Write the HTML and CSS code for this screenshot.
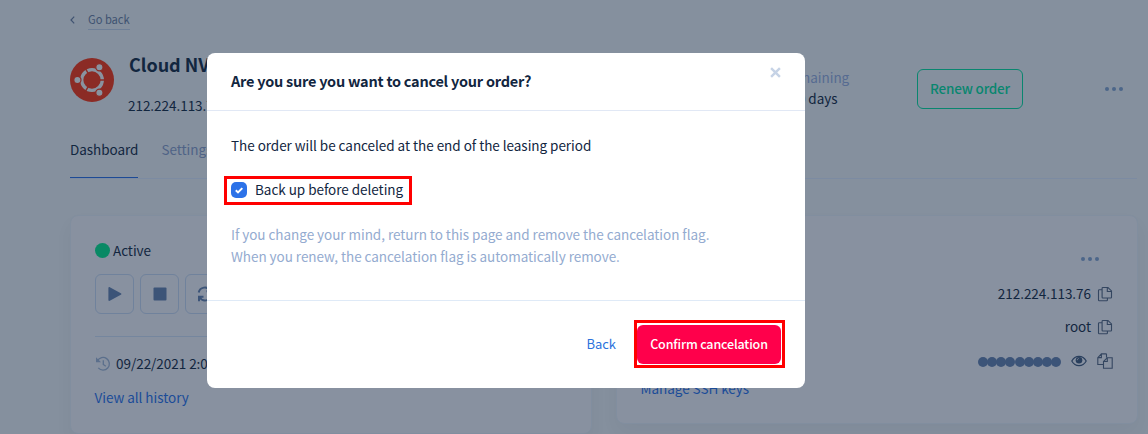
FILE: index.html
```html
<!DOCTYPE html>
<html lang="en">
<head>
<meta charset="utf-8">
<title>Cancel order</title>
<link rel="stylesheet" href="styles.css">
</head>
<body>
<svg class="defs" width="0" height="0">
  <symbol id="copy" viewBox="0 0 16 16"><path d="M5.800 1.500h5.200l3.500 3.400v6.400a.7.7 0 0 1-.7.7H5.800a.7.7 0 0 1-.7-.7V2.200c0-.4.3-.7.7-.7zM10.300 1.500v4h4.200M5.100 3.700H2.200a.7.7 0 0 0-.7.7v9.700c0 .4.3.7.7.7h7.500c.4 0 .7-.3.7-.7V12"/></symbol>
</svg>
<div class="page">
  <nav class="crumb">
    <svg class="chevron" viewBox="0 0 5 8"><path d="M4.2.7 1 4l3.2 3.3"/></svg>
    <a class="goback">Go back</a>
  </nav>
  <header class="head">
    <svg class="logo" viewBox="0 0 44 44">
      <circle cx="22" cy="22" r="22" fill="#8b2b25"/>
      <circle cx="22" cy="22" r="10.3" fill="none" stroke="#8993a0" stroke-width="3.300"/>
      <path d="M29 22h7M18.5 15.9 15 9.9M18.5 28.1 15 34.1" stroke="#8b2b25" stroke-width="1.4"/>
      <g fill="#8993a0" stroke="#8b2b25" stroke-width="1.2">
        <circle cx="7.4" cy="22" r="3.600"/><circle cx="29.4" cy="9.2" r="3.600"/><circle cx="29.4" cy="34.8" r="3.600"/>
      </g>
    </svg>
    <div class="ident"><h1>Cloud NVMe</h1><p>212.224.113.76</p></div>
    <div class="remain"><p class="muted">Remaining</p><p class="days">300 days</p></div>
    <button class="renew">Renew order</button>
    <span class="dots"><i></i><i></i><i></i></span>
  </header>
  <nav class="tabs"><a class="tab on">Dashboard</a><a class="tab">Settings</a></nav>
  <main class="cards">
    <section class="card server">
      <p class="status"><i class="led"></i><span>Active</span></p>
      <div class="controls">
        <span class="ctl"><svg viewBox="0 0 16 16"><path d="M1.4 2v12c0 .8.7 1.2 1.4.8l11-6c.8-.4.8-1.2 0-1.6l-11-6C2.100.8 1.400 1.200 1.400 2z"/></svg></span>
        <span class="ctl"><svg viewBox="0 0 16 16"><rect x="1.500" y="1.500" width="13" height="13" rx="1"/></svg></span>
        <span class="ctl"><svg class="sync" viewBox="0 0 16 16"><path d="M1.700 6.500a6.300 6.300 0 0 1 11.500-2M14.300 9.500a6.300 6.300 0 0 1-11.500 2M14 .8v4.500H9.500M2 15.200v-4.500h4.500"/></svg></span>
      </div>
      <p class="history"><svg viewBox="0 0 16 16"><path d="M2.500 4.800a6.300 6.300 0 1 1 .8 7.100M8.300 4.200v4.300l2.500 1.700"/><path d="M1 1.200v5h5z" class="tip"/></svg><span>09/22/2021 2:05 PM</span></p>
      <a class="link">View all history</a>
    </section>
    <section class="card access">
      <span class="dots"><i></i><i></i><i></i></span>
      <p class="row"><span>212.224.113.76</span><svg class="ico"><use href="#copy"/></svg></p>
      <p class="row"><span>root</span><svg class="ico"><use href="#copy"/></svg></p>
      <p class="row last"><span class="secret"><i></i><i></i><i></i><i></i><i></i><i></i><i></i><i></i><i></i></span>
        <svg class="eye" viewBox="0 0 16 12"><path d="M.8 6C2.500 2.900 5 1.300 8 1.300S13.500 2.900 15.200 6C13.500 9.100 11 10.700 8 10.700S2.500 9.100.8 6z"/><circle cx="8" cy="5.300" r="3.300"/><path class="glint" d="M6.300 5.200c0-.9.600-1.600 1.500-1.700"/></svg>
        <svg class="ico" viewBox="0 0 16 16"><path d="M6.300 11.500H.8V4.600L4.400.9h4.500c.4 0 .6.300.6.600v3M4.400.9v3.700H.8M10.300 4.700h4.900v10.500H6.500V8.500zM10.300 4.700v3.800H6.500"/></svg></p>
      <a class="link">Manage SSH keys</a>
    </section>
  </main>
</div>
<div class="modal">
  <div class="modal-head"><h2>Are you sure you want to cancel your order?</h2>
    <svg class="close" viewBox="0 0 10 10"><path d="M1 1l8 8M9 1 1 9"/></svg></div>
  <div class="modal-body">
    <p class="lead">The order will be canceled at the end of the leasing period</p>
    <label class="backup"><span class="check"><svg viewBox="0 0 16 16"><path d="M4.800 8.300l2.200 2.100 4.300-4.300"/></svg></span><span class="label">Back up before deleting</span></label>
    <p class="hint">If you change your mind, return to this page and remove the cancelation flag.<br>When you renew, the cancelation flag is automatically remove.</p>
  </div>
  <div class="modal-foot"><a class="back">Back</a><span class="mark"><button class="confirm">Confirm cancelation</button></span></div>
</div>
</body>
</html>
```
FILE: styles.css
```css
* { box-sizing: border-box; margin: 0; padding: 0; }
body { width: 1148px; height: 434px; overflow: hidden; position: relative; background: #85909e; color: #12263f;
  font: 13.500px/20px "Noto Sans CJK SC", "Noto Sans", sans-serif; letter-spacing: -.035px; white-space: nowrap; }
button { font: inherit; letter-spacing: inherit; background: none; border: 0; }
i { display: block; }
svg { display: block; flex: none; fill: none; }
.defs { position: absolute; }
.page { height: 434px; overflow: hidden; padding: 11px 10px 0 70px; }
.crumb { display: flex; height: 19px; align-items: flex-start; font-size: 11.200px; line-height: 16px; color: #405371; }
.chevron { width: 5px; height: 8px; margin: 5px 13px 0 0; stroke: #405371; stroke-width: 1.200; }
.goback { height: 19px; border-bottom: 1px solid #6e7f97; }
.head { display: flex; height: 98px; padding-top: 22px; }
.logo { width: 44px; height: 44px; margin-top: 6px; }
.ident { margin-left: 15px; width: 653px; }
h1 { font-size: 18px; line-height: 26px; font-weight: 700; margin-top: -1px; }
.ident p { margin: 18px 0 0 -1px; }
.remain { width: 135px; padding-top: 15px; line-height: 21px; }
.muted { color: #566b91; }
.days { margin-left: 1px; }
.renew { width: 106px; height: 40px; margin-top: 17px; padding-bottom: 2px; border: 1px solid #09866f; border-radius: 6px; color: #09866f; font-weight: 500; font-size: 13.500px; letter-spacing: -.2px; }
.dots { display: flex; gap: 3px; }
.dots i { width: 4px; height: 4px; border-radius: 50%; background: #4c6689; }
.head .dots { margin: 35px 0 0 82px; }
.tabs { display: flex; height: 51px; gap: 24px; border-bottom: 1px solid #7c8ba2; margin-right: 1px; }
.tab { height: 50px; padding-top: 11px; margin-left: -1px; color: #4f6386; }
.on { margin-left: 0; color: #12263f; border-bottom: 1px solid #1d4a95; }
.cards { display: flex; gap: 24px; margin-top: 36px; align-items: flex-start; }
.card { width: 522px; border: 1px solid #818e9f; border-radius: 8px; background: #8891a0; box-shadow: 0 9px 18px rgba(18,38,63,.04); }
.server { height: 219px; padding: 24px 24px; }
.status { display: flex; align-items: center; gap: 3px; height: 21px; }
.status span, .history span, .label { padding-bottom: 1px; }
.led { width: 15px; height: 15px; border-radius: 50%; background: #098965; }
.controls { display: flex; gap: 6px; margin-top: 13px; padding-bottom: 22px; border-bottom: 1px solid #75869e; }
.ctl { display: grid; place-items: center; width: 39px; height: 40px; border: 1px solid #70829c; border-radius: 6px; }
.ctl svg { width: 16px; height: 16px; fill: #3c5478; }
.ctl .sync { fill: none; stroke: #3c5478; stroke-width: 2; }
.history { display: flex; align-items: center; margin-top: 16px; gap: 5px; }
.history svg { width: 16px; height: 16px; stroke: #5b6f8c; stroke-width: 1.300; }
.history .tip { fill: #5b6f8c; stroke: none; }
.link { display: block; margin: 13px 0 0 -.5px; color: #1b4c98; }
.access { height: 209px; padding: 41px 24px 0; }
.access .dots { justify-content: flex-end; margin-right: 14px; }
.row { display: flex; justify-content: flex-end; align-items: center; height: 20px; margin-top: 13px; }
.row span { padding-bottom: 2px; }
.access .dots + .row { margin-top: 23px; }
.row.last { margin-top: 14px; }
.ico { width: 16px; height: 16px; margin-left: 6px; stroke: #344660; stroke-width: 1.100; }
.row .secret { display: flex; padding: 1px 0 0; }
.secret i { width: 10px; height: 10px; margin-left: -.9px; border-radius: 50%; background: #3c5478; }
.eye { width: 16px; height: 12px; margin: 0 4px 0 10px; stroke: #293f5d; stroke-width: 1.200; }
.eye circle { fill: #293f5d; stroke: none; }
.eye .glint { stroke: #8891a0; stroke-width: .8; }
.access .link { margin-top: 7px; }
.modal { position: absolute; left: 207px; top: 53px; width: 598px; height: 335px; border-radius: 8px; background: #fff; }
.modal-head { display: flex; justify-content: space-between; height: 58px; padding: 14px 24px 0 24px; border-bottom: 1px solid #e1e8f5; }
h2 { font-size: 14.500px; line-height: 28px; font-weight: 700; letter-spacing: -.24px; }
.close { width: 11px; height: 11px; stroke: #c6d3e6; stroke-width: 2.200; }
.modal-body { height: 190px; padding: 24px 24px 0 18px; border-bottom: 1px solid #dfeaf7; }
.lead { padding-left: 6px; }
.backup { display: flex; align-items: center; width: 188px; height: 29px; margin: 21px 0 0 -1px; padding: 0 0 1px 4px; border: 3px solid #f00; }
.label { padding-bottom: 2px; }
.check { width: 16px; height: 16px; border-radius: 5px; margin-right: 8px; background: #2c72e8; }
.check svg { stroke: #fff; stroke-width: 2; }
.hint { margin-top: 18px; padding-left: 6px; line-height: 22px; color: #94abd0; }
.modal-foot { display: flex; justify-content: flex-end; align-items: center; height: 85px; padding-right: 20px; gap: 18px; font-size: 13px; }
.back { color: #2c72dc; }
.mark { display: block; width: 151px; height: 48px; border: 3px solid #f00; padding: 2px 0 0; }
.confirm { display: block; width: 144px; height: 39px; border-radius: 6px; background: #ff004b; color: #fff; font-weight: 500; font-size: 12.500px; letter-spacing: -.15px; }
```
